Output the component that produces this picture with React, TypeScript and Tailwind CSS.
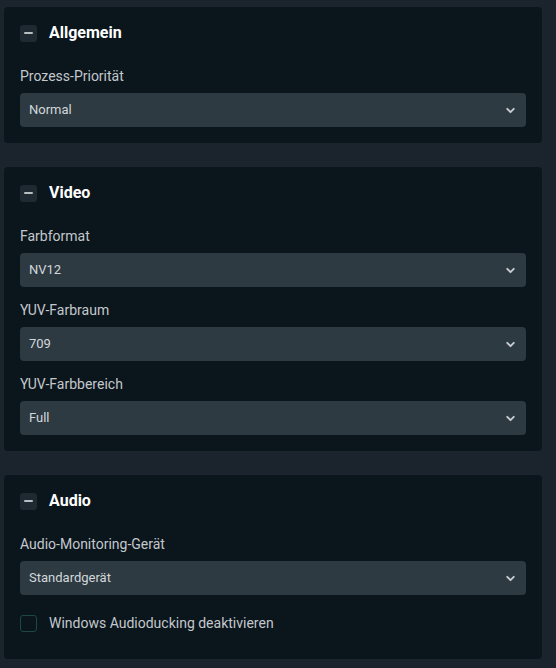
import { ChevronDown } from "lucide-react";

type Field = { label: string; value: string };

function Select({ label, value }: Field) {
  return (
    <div className="pt-[13px]">
      <p className="text-[14px] leading-5 text-[#c3c8cc]">{label}</p>
      <div className="mt-[7px] flex h-[34px] items-center justify-between rounded-[4px] bg-[#2d3a42] pl-[9px] pr-[9px]">
        <span className="text-[13px] text-[#d3d7da]">{value}</span>
        <ChevronDown className="size-[13px] text-[#c9cdd0]" strokeWidth={3.5} />
      </div>
    </div>
  );
}

function Section({ title, fields, children }: { title: string; fields: Field[]; children?: React.ReactNode }) {
  return (
    <section className="rounded-[4px] bg-[#0b151c] px-4 pb-4 pt-[17px]">
      <div className="flex h-[18px] items-center gap-3">
        <div className="flex size-[17px] items-center justify-center rounded-[3px] bg-[#1e2931]">
          <div className="h-[2px] w-[9px] rounded bg-[#b9bec2]" />
        </div>
        <h2 className="text-[16px] font-bold text-white">{title}</h2>
      </div>
      <div className="pt-[11px]">
        {fields.map((f) => (
          <Select key={f.label} {...f} />
        ))}
      </div>
      {children}
    </section>
  );
}

export default function App() {
  return (
    <main className="min-h-screen bg-[#1b242c] pb-[15px] pl-1 pr-[14px] pt-[7px] font-['Roboto',sans-serif]">
      <div className="flex flex-col gap-6">
        <Section title="Allgemein" fields={[{ label: "Prozess-Priorität", value: "Normal" }]} />
        <Section
          title="Video"
          fields={[
            { label: "Farbformat", value: "NV12" },
            { label: "YUV-Farbraum", value: "709" },
            { label: "YUV-Farbbereich", value: "Full" },
          ]}
        />
        <Section title="Audio" fields={[{ label: "Audio-Monitoring-Gerät", value: "Standardgerät" }]}>
          <label className="mt-[18px] mb-[9px] flex items-center gap-3">
            <span className="size-[17px] rounded-[3px] border border-[#1d4741]" />
            <span className="text-[14px] text-[#c3c8cc]">Windows Audioducking deaktivieren</span>
          </label>
        </Section>
      </div>
    </main>
  );
}
